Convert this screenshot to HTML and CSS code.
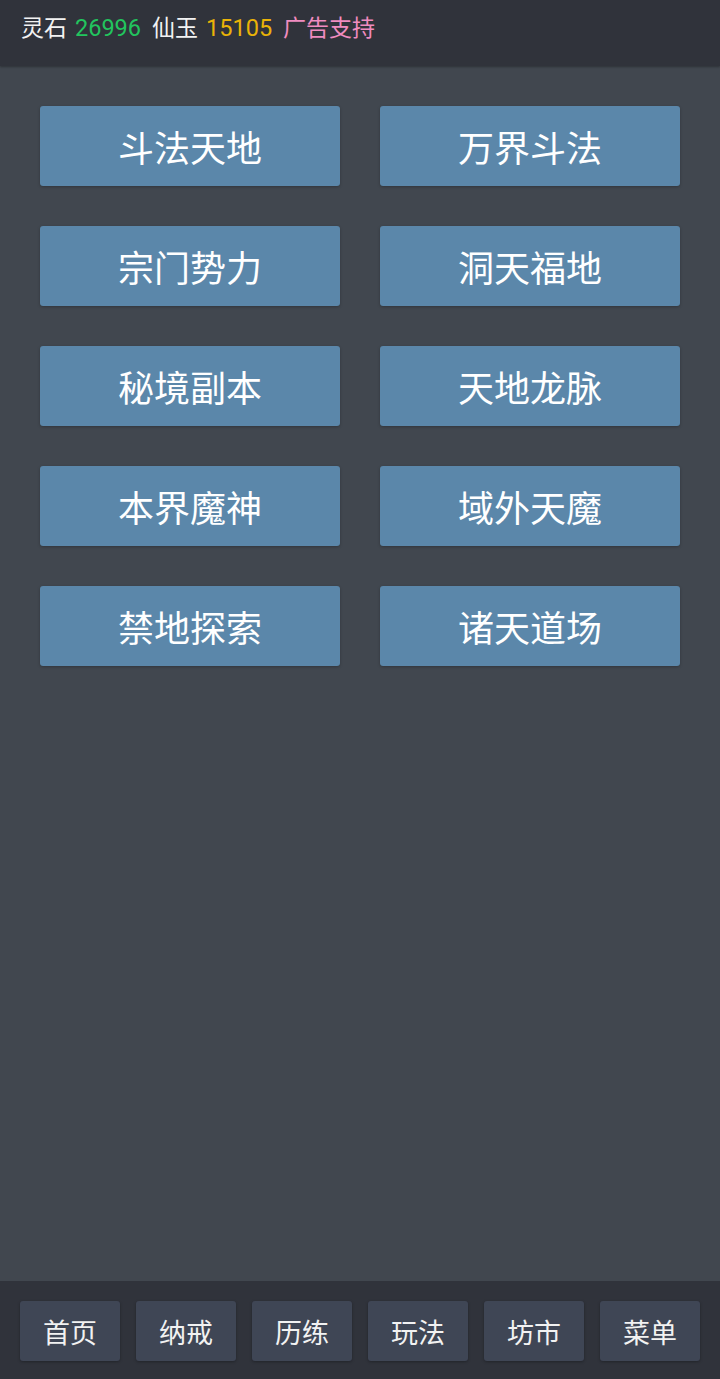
FILE: index.html
```html
<!DOCTYPE html>
<html lang="zh">
<head>
<meta charset="utf-8">
<link rel="stylesheet" href="styles.css">
</head>
<body>
<div class="app">
  <header class="topbar">
    <span class="label">灵石</span>
    <span class="num green">26996</span>
    <span class="label">仙玉</span>
    <span class="num gold">15105</span>
    <span class="ad">广告支持</span>
  </header>
  <main class="content">
    <div class="grid">
      <div class="btn">斗法天地</div>
      <div class="btn">万界斗法</div>
      <div class="btn">宗门势力</div>
      <div class="btn">洞天福地</div>
      <div class="btn">秘境副本</div>
      <div class="btn">天地龙脉</div>
      <div class="btn">本界魔神</div>
      <div class="btn">域外天魔</div>
      <div class="btn">禁地探索</div>
      <div class="btn">诸天道场</div>
    </div>
  </main>
  <nav class="footer">
    <div class="tab">首页</div>
    <div class="tab">纳戒</div>
    <div class="tab">历练</div>
    <div class="tab">玩法</div>
    <div class="tab">坊市</div>
    <div class="tab">菜单</div>
  </nav>
</div>
</body>
</html>
```
FILE: styles.css
```css
html, body {
  margin: 0;
  padding: 0;
}
body {
  font-family: "Noto Sans CJK SC", "Roboto", sans-serif;
  background: #41474f;
  color: #ffffff;
}
.app {
  width: 720px;
  height: 1379px;
  display: flex;
  flex-direction: column;
}
.topbar {
  height: 66px;
  box-sizing: border-box;
  background: #30333b;
  display: flex;
  align-items: baseline;
  padding: 9px 0 0 21px;
  font-size: 23px;
  line-height: 34px;
  gap: 8px;
  box-shadow: 0 1px 2px rgba(0,0,0,0.3);
}
.label { color: #f2f2f2; }
.num { font-family: "Roboto", "Noto Sans CJK SC", sans-serif; font-size: 23.5px; margin-right: 3px; }
.green { color: #22c55e; }
.gold { color: #eab308; }
.ad { color: #f08cc0; }
.content {
  flex: 1;
  padding: 40px 40px 0 40px;
}
.grid {
  display: grid;
  grid-template-columns: 300px 300px;
  column-gap: 40px;
  row-gap: 40px;
}
.btn {
  height: 80px;
  background: #5b87aa;
  border-radius: 3px;
  display: flex;
  align-items: center;
  justify-content: center;
  font-size: 36px;
  color: #ffffff;
  box-shadow: 0 1px 3px rgba(0,0,0,0.25);
}
.footer {
  height: 98px;
  box-sizing: border-box;
  background: #30333b;
  display: flex;
  gap: 16px;
  padding: 20px 20px 0 20px;
}
.tab {
  width: 100px;
  height: 60px;
  background: #3f4655;
  border-radius: 3px;
  display: flex;
  align-items: center;
  justify-content: center;
  font-size: 27px;
  color: #f2f2f2;
  box-shadow: 0 1px 3px rgba(0,0,0,0.3);
}
```
